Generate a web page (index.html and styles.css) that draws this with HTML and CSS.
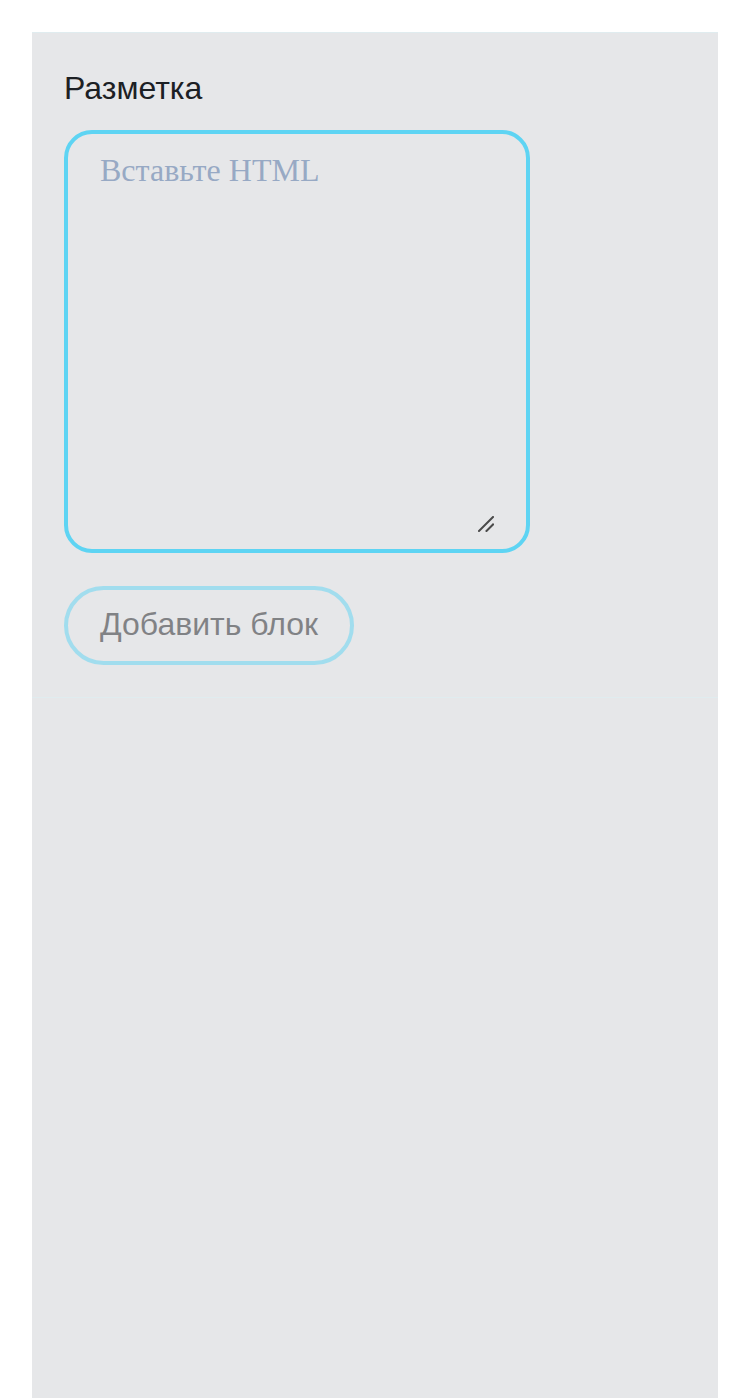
FILE: index.html
```html
<!DOCTYPE html>
<html lang="ru">
<head>
<meta charset="utf-8">
<title>Разметка</title>
<link rel="stylesheet" href="styles.css">
</head>
<body>
<main class="panel">
  <section class="section">
    <label class="label" for="markup">Разметка</label>
    <div class="field">
      <textarea id="markup" class="textarea" placeholder="Вставьте HTML"></textarea>
      <svg class="grip" width="16" height="16" viewBox="0 0 16 16" aria-hidden="true">
        <path d="M1 15 L15 1 M8.5 15 L15 8.5" stroke="#4a4a4a" stroke-width="2" stroke-linecap="square" fill="none"/>
      </svg>
    </div>
    <button class="btn" type="button" disabled>Добавить блок</button>
  </section>
</main>
</body>
</html>
```
FILE: styles.css
```css
html, body {
  margin: 0;
  padding: 0;
  background: #ffffff;
}
body {
  padding: 32px 32px 0;
  font-family: "Liberation Sans", Arial, sans-serif;
}
.panel {
  background: #e6e7e9;
  min-height: 1366px;
}
.section {
  display: flex;
  flex-direction: column;
  align-items: flex-start;
  padding: 32px;
  border-top: 1px solid #e0ecef;
  border-bottom: 1px solid #e0ecef;
}
.label {
  font-size: 32px;
  line-height: 46px;
  color: #1c2024;
  margin-bottom: 19px;
}
.field {
  position: relative;
  box-sizing: border-box;
  width: 466px;
  height: 423px;
  padding: 18px 32px 16px;
  border: 4px solid #5ed4f3;
  border-radius: 28px;
  margin-bottom: 33px;
}
.textarea {
  display: block;
  box-sizing: border-box;
  width: 100%;
  height: 100%;
  margin: 0;
  padding: 0;
  border: none;
  outline: none;
  background: transparent;
  font-family: "Liberation Serif", "Times New Roman", serif;
  font-size: 32px;
  color: #1c2024;
  resize: none;
}
.textarea::placeholder {
  color: #97a9c4;
  opacity: 1;
}
.grip {
  position: absolute;
  right: 32px;
  bottom: 17px;
}
.btn {
  font-family: "Liberation Sans", Arial, sans-serif;
  font-size: 32px;
  line-height: 37px;
  padding: 16px 32px 18px;
  border: 4px solid #5ed4f3;
  border-radius: 40px;
  background: transparent;
  color: #1c2024;
  opacity: 0.5;
  cursor: default;
}
```
